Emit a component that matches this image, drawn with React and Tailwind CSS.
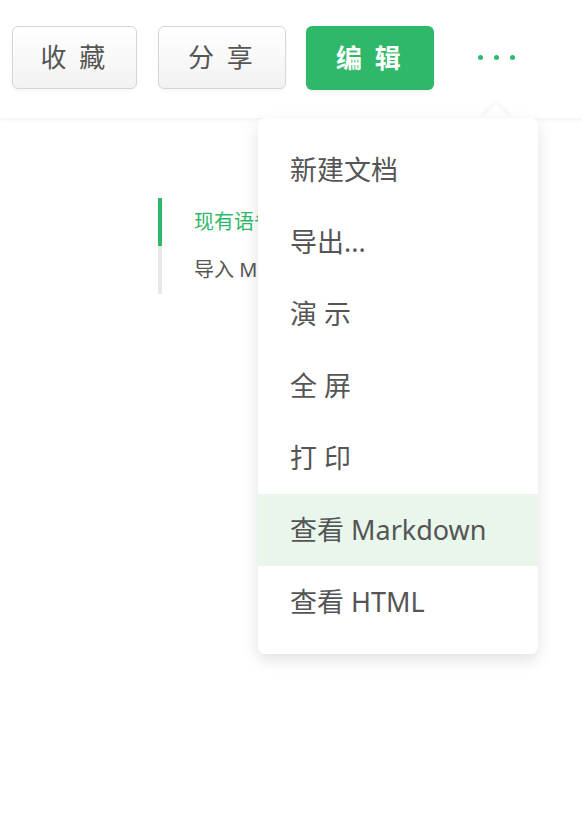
import React from 'react';

const menuItems = ['新建文档', '导出...', '演 示', '全 屏', '打 印', '查看 Markdown', '查看 HTML'];

const GrayButton = ({ children, width }) => (
    <button className={`h-[63px] ${width} rounded-[6px] border border-[#d6d6d6] bg-gradient-to-b from-white to-[#f2f2f2] text-[26px] tracking-[3px] text-[#555] shadow-[0_2px_3px_rgba(0,0,0,0.04)]`}>
        {children}
    </button>
);

export default function App() {
    return (
        <div className="relative h-[814px] w-[582px] overflow-hidden bg-white font-['Noto_Sans','Noto_Sans_CJK_SC',sans-serif]">
            <header className="flex h-[118px] items-start pl-[12px] pt-[26px] shadow-[0_2px_5px_rgba(0,0,0,0.05)]">
                <GrayButton width="w-[125px]">收 藏</GrayButton>
                <div className="ml-[21px]">
                    <GrayButton width="w-[128px]">分 享</GrayButton>
                </div>
                <button className="ml-[20px] h-[64px] w-[128px] rounded-[6px] bg-[#30b86a] text-[26px] font-bold tracking-[3px] text-white shadow-[0_2px_3px_rgba(0,0,0,0.06)]">
                    编 辑
                </button>
                <div className="ml-[44px] flex h-[63px] items-center gap-[11px]">
                    <span className="h-[5px] w-[5px] rounded-full bg-[#30b86a]" />
                    <span className="h-[5px] w-[5px] rounded-full bg-[#30b86a]" />
                    <span className="h-[5px] w-[5px] rounded-full bg-[#30b86a]" />
                </div>
            </header>

            <div className="ml-[158px] mt-[80px] flex w-[240px] flex-col">
                <div className="flex h-[48px] items-center whitespace-nowrap border-l-[4px] border-[#30b86a] pl-[32px] text-[20px] text-[#30b86a]">
                    现有语雀文档
                </div>
                <div className="flex h-[48px] items-center whitespace-nowrap border-l-[4px] border-[#e8e8e8] pl-[32px] text-[20px] text-[#555]">
                    导入 Markdown
                </div>
            </div>

            {/* dropdown menu */}
            <div className="absolute left-[258px] top-[118px] w-[280px]">
                <div className="absolute -top-[10px] left-[228px] h-[20px] w-[20px] rotate-45 bg-white shadow-[-2px_-2px_5px_rgba(0,0,0,0.05)]" />
                <div className="relative rounded-[7px] bg-white py-[16px] shadow-[0_6px_16px_rgba(0,0,0,0.12)]">
                    {menuItems.map((item, i) => (
                        <div
                            key={item}
                            className={`flex h-[72px] items-center pl-[32px] text-[27px] text-[#555] ${i === 5 ? 'bg-[#e8f6ec]' : ''}`}
                        >
                            {item}
                        </div>
                    ))}
                </div>
            </div>
        </div>
    );
}
